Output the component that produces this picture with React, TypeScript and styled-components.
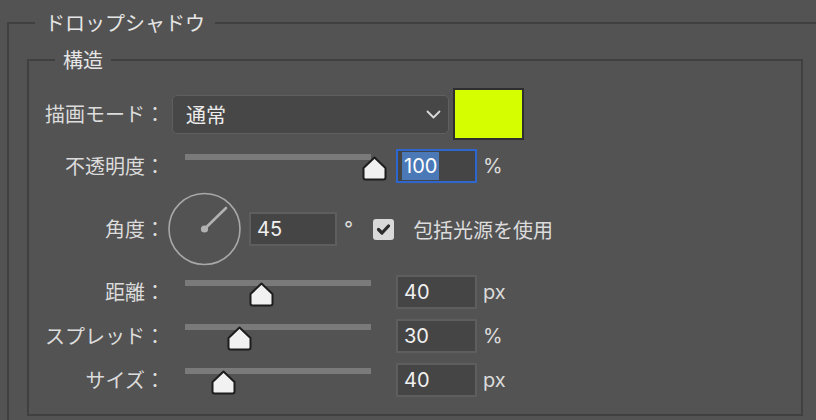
import React from 'react'
import styled, { createGlobalStyle } from 'styled-components'

const GlobalStyle = createGlobalStyle`
  html, body {
    margin: 0;
    padding: 0;
    background: #535353;
    overflow: hidden;
  }
  body {
    font-family: Inter, "Noto Sans CJK JP", sans-serif;
    color: #dedede;
  }
`

const sliders = [
  { label: '距離：', value: '40', unit: 'px', thumb: 65 },
  { label: 'スプレッド：', value: '30', unit: '%', thumb: 43 },
  { label: 'サイズ：', value: '40', unit: 'px', thumb: 27 },
]

const Thumb = ({ left }: { left: number }) => (
  <ThumbWrap $left={left}>
    <svg width="25" height="25" viewBox="0 0 25 25">
      <path
        d="M12.5 1.5 L23.5 12 V21.5 Q23.5 23.5 21.5 23.5 H3.5 Q1.5 23.5 1.5 21.5 V12 Z"
        fill="#f1f1f1"
        stroke="#1d1d1d"
        strokeWidth="2"
        strokeLinejoin="round"
      />
    </svg>
  </ThumbWrap>
)

const App: React.FC = () => {
  return (
    <>
      <GlobalStyle />
      <Outer>
        <OuterLegend>ドロップシャドウ</OuterLegend>
        <Inner>
          <InnerLegend>構造</InnerLegend>

          <Row>
            <Label>描画モード：</Label>
            <Select>
              <span>通常</span>
              <svg width="15" height="9" viewBox="0 0 15 9">
                <path d="M1.5 1.5 L7.5 7.5 L13.5 1.5" fill="none" stroke="#dadada" strokeWidth="1.8" strokeLinecap="round" strokeLinejoin="round" />
              </svg>
            </Select>
            <Swatch />
          </Row>

          <Row $mt={9}>
            <Label>不透明度：</Label>
            <Slider>
              <Track />
              <Thumb left={178} />
            </Slider>
            <NumberBox $focused>
              <Selected>100</Selected>
            </NumberBox>
            <Unit>%</Unit>
          </Row>

          <Row $mt={9}>
            <Label>角度：</Label>
            <Dial width="74" height="74" viewBox="0 0 74 74">
              <circle cx="36.5" cy="37" r="35.5" fill="none" stroke="#a8a8a8" strokeWidth="1.6" />
              <line x1="36.5" y1="37" x2="58" y2="16" stroke="#b2b2b2" strokeWidth="2.6" strokeLinecap="round" />
              <circle cx="36.5" cy="37" r="3.6" fill="#b2b2b2" />
            </Dial>
            <NumberBox $width={88} $ml={7}>45</NumberBox>
            <Degree>°</Degree>
            <CheckBox>
              <svg width="21" height="21" viewBox="0 0 21 21">
                <path d="M5.5 10.5 L9 14 L15.5 7" fill="none" stroke="#2b2b2b" strokeWidth="3.2" strokeLinecap="round" strokeLinejoin="round" />
              </svg>
            </CheckBox>
            <CheckLabel>包括光源を使用</CheckLabel>
          </Row>

          {sliders.map((s, i) => (
            <Row key={s.label} $mt={i === 0 ? 9 : 10}>
              <Label>{s.label}</Label>
              <Slider>
                <Track />
                <Thumb left={s.thumb} />
              </Slider>
              <NumberBox>{s.value}</NumberBox>
              <Unit>{s.unit}</Unit>
            </Row>
          ))}
        </Inner>
      </Outer>
    </>
  )
}

export default App

const Outer = styled.fieldset`
  box-sizing: border-box;
  width: 900px;
  margin: 11px 0 0 7px;
  padding: 13px 0 24px 18px;
  border: 2px solid #404040;
  min-inline-size: 0;
`

const OuterLegend = styled.legend`
  margin-left: 8px;
  padding: 0 10px;
  font-family: "Noto Sans CJK JP", sans-serif;
  font-size: 20px;
  line-height: 24px;
  color: #e6e6e6;
`

const Inner = styled.fieldset`
  box-sizing: border-box;
  width: 776px;
  margin: 0;
  padding: 16px 0 17px 0;
  border: 2px solid #404040;
  min-inline-size: 0;
`

const InnerLegend = styled.legend`
  margin-left: 26px;
  padding: 0 8px;
  font-family: "Noto Sans CJK JP", sans-serif;
  font-size: 20px;
  line-height: 24px;
  color: #e6e6e6;
`

const Row = styled.div<{ $mt?: number }>`
  display: flex;
  align-items: center;
  margin-top: ${p => p.$mt ?? 0}px;
`

const Label = styled.span`
  flex: none;
  width: 136px;
  text-align: right;
  font-family: "Noto Sans CJK JP", sans-serif;
  font-size: 20px;
  line-height: 24px;
  color: #dcdcdc;
`

const Select = styled.div`
  box-sizing: border-box;
  display: flex;
  align-items: center;
  justify-content: space-between;
  width: 277px;
  height: 39px;
  margin-left: 7px;
  padding: 0 7px 0 13px;
  background: #474747;
  border: 1.5px solid #5f5f5f;
  border-radius: 5px;
  font-family: "Noto Sans CJK JP", sans-serif;
  font-size: 20px;
  color: #ececec;
`

const Swatch = styled.div`
  box-sizing: border-box;
  width: 71px;
  height: 52px;
  margin-left: 4px;
  background: #d5ff00;
  border: 2px solid #2e2e2e;
`

const Slider = styled.div`
  position: relative;
  flex: none;
  width: 186px;
  height: 34px;
  margin-left: 20px;
`

const Track = styled.div`
  margin-top: 5px;
  height: 6px;
  background: #7a7a7a;
`

const ThumbWrap = styled.div<{ $left: number }>`
  position: absolute;
  top: 7px;
  left: ${p => p.$left - 1}px;
  width: 25px;
  height: 25px;
  svg { display: block; }
`

const NumberBox = styled.div<{ $focused?: boolean; $width?: number; $ml?: number }>`
  box-sizing: border-box;
  display: flex;
  align-items: center;
  flex: none;
  width: ${p => p.$width ?? 81}px;
  height: 34px;
  margin-left: ${p => p.$ml ?? 25}px;
  padding-left: ${p => (p.$focused ? 4 : 6)}px;
  background: #454545;
  border: 2px solid ${p => (p.$focused ? '#2d66cf' : '#5e5e5e')};
  font-size: 20px;
  color: #f0f0f0;
`

const Selected = styled.span`
  display: inline-block;
  line-height: 28px;
  padding: 0 2px;
  background: #4b79b8;
  color: #fff;
`

const Unit = styled.span`
  margin-left: 6px;
  font-size: 20px;
  color: #dcdcdc;
`

const Dial = styled.svg`
  display: block;
  flex: none;
  margin-left: 3px;
`

const Degree = styled.span`
  margin-left: 7px;
  font-size: 20px;
  color: #dcdcdc;
`

const CheckBox = styled.div`
  flex: none;
  width: 21px;
  height: 21px;
  margin-left: 20px;
  background: #d9d9d9;
  border-radius: 3px;
  svg { display: block; }
`

const CheckLabel = styled.span`
  margin-left: 19px;
  font-family: "Noto Sans CJK JP", sans-serif;
  font-size: 20px;
  color: #dcdcdc;
`
